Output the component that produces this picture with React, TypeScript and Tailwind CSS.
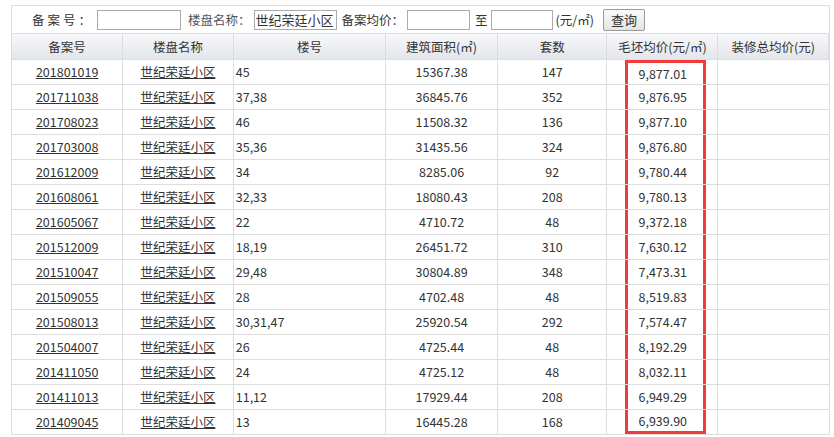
import React from 'react';

const rows: [string, string, string, string, string][] = [
  ['201801019', '45', '15367.38', '147', '9,877.01'],
  ['201711038', '37,38', '36845.76', '352', '9,876.95'],
  ['201708023', '46', '11508.32', '136', '9,877.10'],
  ['201703008', '35,36', '31435.56', '324', '9,876.80'],
  ['201612009', '34', '8285.06', '92', '9,780.44'],
  ['201608061', '32,33', '18080.43', '208', '9,780.13'],
  ['201605067', '22', '4710.72', '48', '9,372.18'],
  ['201512009', '18,19', '26451.72', '310', '7,630.12'],
  ['201510047', '29,48', '30804.89', '348', '7,473.31'],
  ['201509055', '28', '4702.48', '48', '8,519.83'],
  ['201508013', '30,31,47', '25920.54', '292', '7,574.47'],
  ['201504007', '26', '4725.44', '48', '8,192.29'],
  ['201411050', '24', '4725.12', '48', '8,032.11'],
  ['201411013', '11,12', '17929.44', '208', '6,949.29'],
  ['201409045', '13', '16445.28', '168', '6,939.90'],
];

const widths = ['w-[111px]', 'w-[111px]', 'w-[153px]', 'w-[112px]', 'w-[110px]', 'w-[111px]', 'w-[111px]'];
const heads = ['备案号', '楼盘名称', '楼号', '建筑面积(㎡)', '套数', '毛坯均价(元/㎡)', '装修总均价(元)'];

const App: React.FC = () => {
  return (
    <div className="w-[834px] h-[437px] bg-white overflow-hidden text-[12.5px] text-[#333]" style={{ fontFamily: '"Noto Sans CJK SC", sans-serif' }}>
      <div className="ml-[11px] mt-[5px] w-[819px] border border-[#ddd] border-b-0">
        <div className="h-[27px] flex items-center pl-[20px] gap-[3px] whitespace-nowrap leading-[16px]">
          <span className="tracking-[3px]">备案号：</span>
          <input className="w-[84px] h-[20px] border border-[#aaa]" />
          <span className="ml-[4px] text-[#555]">楼盘名称：</span>
          <input className="w-[83px] h-[20px] border border-[#aaa] text-[13px] px-[1px]" defaultValue="世纪荣廷小区" />
          <span className="ml-[2px]">备案均价：</span>
          <input className="w-[63px] h-[20px] border border-[#aaa]" />
          <span className="ml-[2px]">至</span>
          <input className="w-[62px] h-[20px] border border-[#aaa]" />
          <span>(元/㎡)</span>
          <button className="ml-[6px] h-[22px] px-[7px] border border-[#999] rounded-[2px] bg-gradient-to-b from-[#fafafa] to-[#e4e4e4] text-[13px]">查询</button>
        </div>
        <table className="border-collapse table-fixed leading-[16px]">
          <thead>
            <tr className="bg-gradient-to-b from-[#f7f8fa] to-[#e2e5ea]">
              {heads.map((h, i) => (
                <th key={i} className={`${widths[i]} h-[26px] p-0 border border-[#ddd] border-l-0 font-normal text-center`}>{h}</th>
              ))}
            </tr>
          </thead>
          <tbody>
            {rows.map((r, i) => (
              <tr key={i}>
                <td className="h-[25px] p-0 border border-[#ddd] border-l-0 text-center"><a className="underline">{r[0]}</a></td>
                <td className="p-0 border border-[#ddd] text-center"><a className="underline">世纪荣廷小区</a></td>
                <td className="p-0 border border-[#ddd] pl-[2px]">{r[1]}</td>
                <td className="p-0 border border-[#ddd] text-center">{r[2]}</td>
                <td className="p-0 border border-[#ddd] text-center">{r[3]}</td>
                <td className="p-0 border border-[#ddd]">
                  <div className={`ml-[18px] w-[81px] h-[24px] flex items-center pl-[10px] border-x-[3px] border-[#f03b3b] ${i === 0 ? 'border-t-[3px]' : ''} ${i === rows.length - 1 ? 'border-b-[3px]' : ''}`}>{r[4]}</div>
                </td>
                <td className="p-0 border border-[#ddd] border-r-0"></td>
              </tr>
            ))}
          </tbody>
        </table>
      </div>
    </div>
  );
};

export default App;
